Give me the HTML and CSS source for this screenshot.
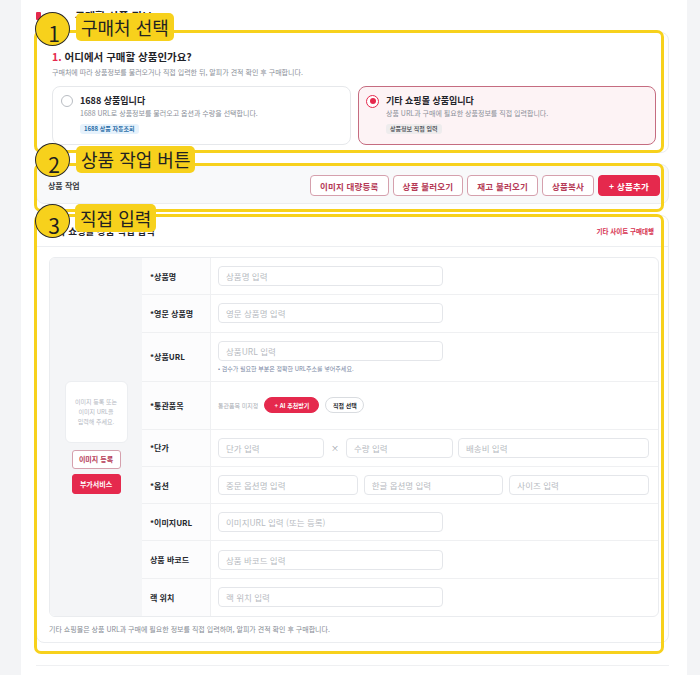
FILE: index.html
```html
<!DOCTYPE html>
<html lang="ko">
<head>
<meta charset="utf-8">
<title>구매할 상품 정보</title>
<link rel="stylesheet" href="styles.css">
</head>
<body>
<div class="page">
  <div class="page-title"><span class="title-mark"></span><span class="title-text">구매할 상품 정보</span></div>

  <section class="card source">
    <h3 class="q-title"><span class="q-num">1.</span> 어디에서 구매할 상품인가요?</h3>
    <p class="q-desc">구매처에 따라 상품정보를 불러오거나 직접 입력한 뒤, 알피가 견적 확인 후 구매합니다.</p>
    <div class="options">
      <div class="option">
        <span class="radio"></span>
        <div class="opt-body">
          <div class="opt-title">1688 상품입니다</div>
          <div class="opt-desc">1688 URL로 상품정보를 불러오고 옵션과 수량을 선택합니다.</div>
          <span class="badge badge-blue">1688 상품 자동조회</span>
        </div>
      </div>
      <div class="option selected">
        <span class="radio on"></span>
        <div class="opt-body">
          <div class="opt-title">기타 쇼핑몰 상품입니다</div>
          <div class="opt-desc">상품 URL과 구매에 필요한 상품정보를 직접 입력합니다.</div>
          <span class="badge badge-gray">상품정보 직접 입력</span>
        </div>
      </div>
    </div>
  </section>

  <section class="card toolbar">
    <span class="toolbar-title">상품 작업</span>
    <div class="toolbar-actions">
      <button class="btn btn-outline">이미지 대량등록</button>
      <button class="btn btn-outline">상품 불러오기</button>
      <button class="btn btn-outline">재고 불러오기</button>
      <button class="btn btn-outline">상품복사</button>
      <button class="btn btn-primary">+ 상품추가</button>
    </div>
  </section>

  <section class="card direct">
    <div class="direct-head">
      <span class="direct-title">기타 쇼핑몰 상품 직접 입력</span>
      <span class="direct-tag">기타 사이트 구매대행</span>
    </div>
    <div class="direct-body">
      <div class="form-table">
        <div class="img-cell">
          <div class="img-drop">이미지 등록 또는<br>이미지 URL을<br>입력해 주세요.</div>
          <button class="btn-sm btn-outline">이미지 등록</button>
          <button class="btn-sm btn-primary">부가서비스</button>
        </div>

        <div class="lbl">*상품명</div>
        <div class="val"><input class="inp w225" placeholder="상품명 입력"></div>

        <div class="lbl">*영문 상품명</div>
        <div class="val"><input class="inp w225" placeholder="영문 상품명 입력"></div>

        <div class="lbl">*상품URL</div>
        <div class="val val-col">
          <input class="inp w225" placeholder="상품URL 입력">
          <span class="hint">• 검수가 필요한 부분은 정확한 URL주소를 넣어주세요.</span>
        </div>

        <div class="lbl">*통관품목</div>
        <div class="val">
          <span class="muted">통관품목 미지정</span>
          <button class="pill pill-red">+ AI 추천받기</button>
          <button class="pill pill-white">직접 선택</button>
        </div>

        <div class="lbl">*단가</div>
        <div class="val">
          <input class="inp w106" placeholder="단가 입력">
          <span class="times">×</span>
          <input class="inp w107" placeholder="수량 입력">
          <input class="inp grow ml5" placeholder="배송비 입력">
        </div>

        <div class="lbl">*옵션</div>
        <div class="val gap6">
          <input class="inp grow" placeholder="중문 옵션명 입력">
          <input class="inp grow" placeholder="한글 옵션명 입력">
          <input class="inp grow" placeholder="사이즈 입력">
        </div>

        <div class="lbl">*이미지URL</div>
        <div class="val"><input class="inp w225" placeholder="이미지URL 입력 (또는 등록)"></div>

        <div class="lbl">상품 바코드</div>
        <div class="val"><input class="inp w225" placeholder="상품 바코드 입력"></div>

        <div class="lbl">랙 위치</div>
        <div class="val"><input class="inp w225" placeholder="랙 위치 입력"></div>
      </div>
      <p class="direct-note">기타 쇼핑몰은 상품 URL과 구매에 필요한 정보를 직접 입력하며, 알피가 견적 확인 후 구매합니다.</p>
    </div>
  </section>

  <div class="next-card"></div>
</div>

<div class="annot">
  <div class="hl hl1"></div>
  <div class="hl hl2"></div>
  <div class="hl hl3"></div>
  <div class="num n1">1</div>
  <div class="tag t1">구매처 선택</div>
  <div class="num n2">2</div>
  <div class="tag t2">상품 작업 버튼</div>
  <div class="num n3">3</div>
  <div class="tag t3">직접 입력</div>
</div>
</body>
</html>
```

FILE: styles.css
```css
* { box-sizing: border-box; }
html, body { margin: 0; padding: 0; }
body {
  background: #f3f4f6;
  font-family: "Noto Sans CJK KR", "Noto Sans", sans-serif;
  color: #1f2329;
  position: relative;
  width: 700px;
  height: 675px;
  overflow: hidden;
}
button, input { font-family: inherit; }

.page {
  margin-left: 21px;
  width: 666px;
  height: 675px;
  background: #fff;
  padding: 8px 18px 0 15px;
}

.page-title {
  height: 16px;
  display: flex;
  align-items: center;
  font-size: 11px;
  font-weight: 700;
}
.title-mark { width: 5px; height: 8px; background: #e5294d; border-radius: 1px; }
.title-text { margin-left: 34px; }

.card {
  border: 1px solid #ebedf0;
  border-radius: 8px;
  background: #fff;
}

/* section 1 */
.source { margin-top: 8px; padding: 15px 12px 7px 15px; }
.q-title { margin: 0; font-size: 10.5px; line-height: 18px; font-weight: 700; }
.q-num { color: #e5294d; }
.q-desc { margin: 1px 0 0; font-size: 7px; line-height: 10px; color: #8b9099; }
.options { margin-top: 9px; display: grid; grid-template-columns: 1fr 1fr; gap: 7px; }
.option {
  height: 59px;
  display: flex;
  gap: 7px;
  padding: 7px 8px 10px 8px;
  border: 1px solid #e6e8eb;
  border-radius: 8px;
  background: #fff;
}
.option.selected { background: #fdf3f5; border: 1.5px solid #c56c80; padding: 6.5px 8px 9.5px 7.5px; }
.radio {
  flex: none;
  width: 12px; height: 12px;
  margin-top: 1px;
  border: 1.5px solid #b9bdc3;
  border-radius: 50%;
  background: #fff;
}
.radio.on { border: 1.5px solid #e5294d; display: flex; align-items: center; justify-content: center; width: 13px; height: 13px; }
.radio.on::after { content: ""; width: 6px; height: 6px; border-radius: 50%; background: #e5294d; }
.opt-body { display: flex; flex-direction: column; align-items: flex-start; }
.opt-title { font-size: 9px; line-height: 14px; font-weight: 700; }
.opt-desc { font-size: 7px; line-height: 11px; color: #8b9099; }
.badge {
  margin-top: 5px;
  height: 10px;
  line-height: 10px;
  padding: 0 4px;
  font-size: 6px;
  font-weight: 700;
  border-radius: 3px;
}
.badge-blue { background: #e6f2fc; color: #2b6ea8; }
.badge-gray { background: #eeeced; color: #5c5f66; }

/* section 2 */
.toolbar {
  margin-top: 11px;
  height: 40px;
  padding: 3px 8px 0 11px;
  display: flex;
  align-items: center;
  justify-content: space-between;
  background: #f8f9fa;
}
.toolbar-title { font-size: 8px; font-weight: 700; color: #3a3d42; }
.toolbar-actions { display: flex; gap: 4px; }
.btn {
  height: 21px;
  padding: 0 9px;
  font-size: 8.5px;
  font-weight: 700;
  border-radius: 4px;
  letter-spacing: 0.2px;
}
.btn-outline { background: #fff; border: 1px solid #d5a0ad; color: #b53a56; }
.btn-primary { background: #e5294d; border: 1px solid #e5294d; color: #fff; padding: 0 10px; }

/* section 3 */
.direct { margin-top: 11px; }
.direct-head {
  display: flex;
  justify-content: space-between;
  align-items: center;
  padding: 8px 14px 8px 11px;
  border-bottom: 1px solid #eceef1;
}
.direct-title { font-size: 9.5px; line-height: 14px; font-weight: 700; }
.direct-tag { font-size: 6.5px; font-weight: 700; color: #d6304f; }
.direct-body { padding: 10px 9px 8px 12px; }

.form-table {
  display: grid;
  grid-template-columns: 92px 69px 1fr;
  grid-template-rows: 37.3px 37.3px 49px 48px 37.3px 37.3px 37.3px 37.3px 37.3px;
  border: 1px solid #eaecef;
  border-radius: 6px;
  overflow: hidden;
}
.img-cell {
  grid-column: 1;
  grid-row: 1 / span 9;
  background: #f4f5f7;
  display: flex;
  flex-direction: column;
  align-items: center;
  justify-content: center;
}
.img-drop {
  width: 63px;
  height: 62px;
  background: #fff;
  border: 1px solid #eceef1;
  border-radius: 6px;
  display: flex;
  align-items: center;
  justify-content: center;
  text-align: center;
  font-size: 6px;
  line-height: 10px;
  color: #b4b8bf;
}
.btn-sm {
  width: 49px;
  font-size: 7px;
  font-weight: 700;
  border-radius: 3px;
  padding: 0;
}
.img-drop + .btn-sm { margin-top: 7px; height: 19px; }
.btn-sm.btn-primary { margin-top: 5px; height: 20px; }

.lbl {
  display: flex;
  align-items: center;
  padding-left: 8px;
  font-size: 8px;
  font-weight: 700;
  color: #25282d;
  background: #fcfcfd;
  border-right: 1px solid #eff0f2;
  border-bottom: 1px solid #eff0f2;
}
.val {
  display: flex;
  align-items: center;
  padding: 0 9px 0 7px;
  border-bottom: 1px solid #eff0f2;
  min-width: 0;
}
.form-table > .lbl:nth-last-child(2),
.form-table > .val:last-child { border-bottom: 0; }
.val-col { flex-direction: column; align-items: flex-start; justify-content: center; gap: 4px; }
.gap6 { gap: 6px; }

.inp {
  height: 20px;
  border: 1px solid #e4e6ea;
  border-radius: 4px;
  padding: 0 7px;
  font-size: 8.5px;
  color: #333;
  background: #fff;
  outline: none;
  min-width: 0;
}
.inp::placeholder { color: #b7bbc1; }
.w225 { width: 225px; }
.w106 { width: 106px; flex: none; }
.w107 { width: 107px; flex: none; }
.grow { flex: 1; }
.ml5 { margin-left: 5px; }
.times { width: 22px; text-align: center; font-size: 8px; color: #9aa0a8; }
.hint { font-size: 6px; line-height: 8px; color: #7887a3; }
.muted { font-size: 6px; color: #a9adb4; margin-right: 6px; }
.pill {
  height: 16px;
  border-radius: 8px;
  font-size: 6px;
  font-weight: 700;
  padding: 0 8px;
}
.pill-red { background: #e5294d; border: 1px solid #e5294d; color: #fff; width: 55px; padding: 0; }
.pill-white { background: #fff; border: 1px solid #d9dce0; color: #2b2e33; margin-left: 6px; width: 39px; padding: 0; }

.direct-note { margin: 7px 0 0; font-size: 7px; line-height: 10px; color: #868b93; }

.next-card { margin-top: 22px; border-top: 1px solid #eff0f2; }

/* annotation overlay */
.annot { position: absolute; left: 0; top: 0; width: 700px; height: 675px; pointer-events: none; }
.hl { position: absolute; border: 3px solid #f7d11c; border-radius: 7px; }
.hl1 { left: 34px; top: 30px; width: 630px; height: 123px; }
.hl2 { left: 34px; top: 163px; width: 630px; height: 49px; }
.hl3 { left: 34px; top: 214px; width: 630px; height: 440px; }
.num {
  position: absolute;
  width: 35px;
  height: 34px;
  border-radius: 50%;
  background: #f7d11c;
  border: 1.5px solid #2a2a2a;
  display: flex;
  align-items: flex-end;
  justify-content: center;
  font-size: 21px;
  line-height: 1;
  padding-bottom: 1px;
  padding-left: 3px;
  color: #1e1e1e;
}
.n1 { left: 35px; top: 12px; }
.n2 { left: 35px; top: 143px; }
.n3 { left: 35px; top: 204px; }
.tag {
  position: absolute;
  background: #f7d11c;
  border-radius: 5px;
  font-size: 18px;
  line-height: 28px;
  height: 28px;
  padding: 0 5px;
  color: #222;
}
.t1 { left: 76px; top: 13px; }
.t2 { left: 76px; top: 146px; height: 27px; line-height: 27px; }
.t3 { left: 75px; top: 204px; }
```
